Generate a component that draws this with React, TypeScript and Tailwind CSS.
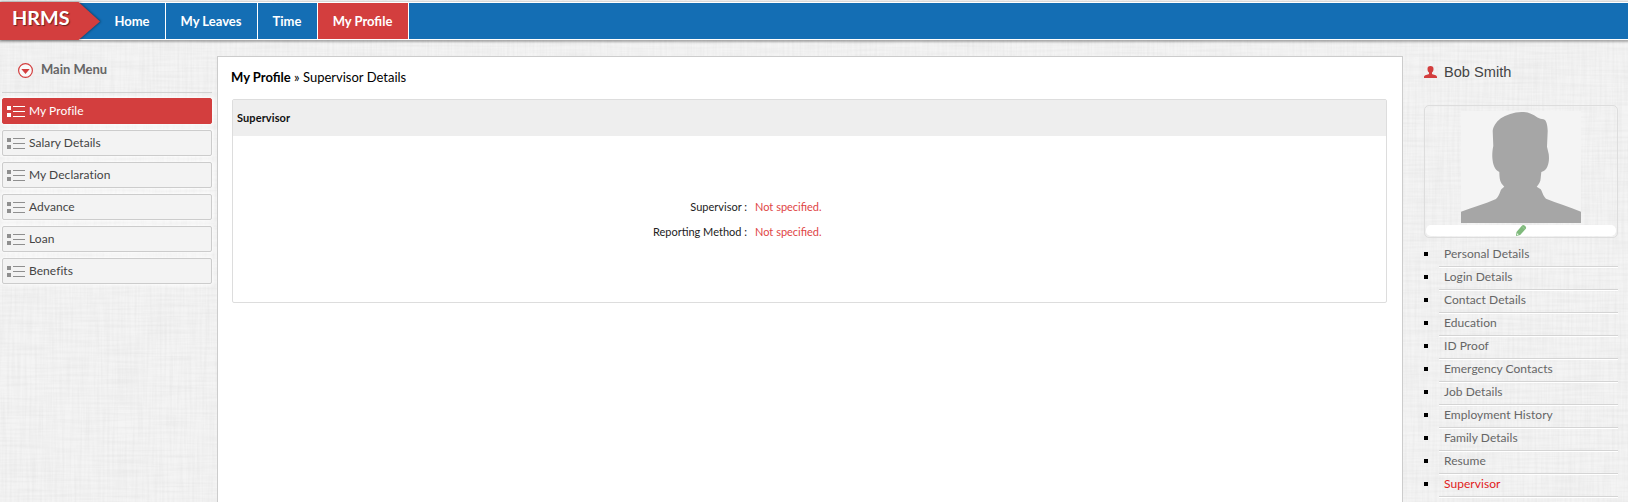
import React from "react";

const nav = [
  { label: "Home", width: "w-[66px]" },
  { label: "My Leaves", width: "w-[92px]" },
  { label: "Time", width: "w-[60px]" },
  { label: "My Profile", width: "w-[91px]", active: true },
];

const menu = ["My Profile", "Salary Details", "My Declaration", "Advance", "Loan", "Benefits"];

const links = [
  "Personal Details",
  "Login Details",
  "Contact Details",
  "Education",
  "ID Proof",
  "Emergency Contacts",
  "Job Details",
  "Employment History",
  "Family Details",
  "Resume",
  "Supervisor",
];

function Linen() {
  return (
    <svg className="absolute inset-0 h-full w-full" aria-hidden="true">
      <filter id="weft" x="0" y="0" width="100%" height="100%" colorInterpolationFilters="sRGB">
        <feTurbulence type="fractalNoise" baseFrequency="0.02 0.4" numOctaves="2" seed="4" />
        <feColorMatrix values="0 0 0 0 0.7  0 0 0 0 0.7  0 0 0 0 0.7  0.2 0 0 0 -0.07" />
      </filter>
      <filter id="warp" x="0" y="0" width="100%" height="100%" colorInterpolationFilters="sRGB">
        <feTurbulence type="fractalNoise" baseFrequency="0.4 0.02" numOctaves="2" seed="9" />
        <feColorMatrix values="0 0 0 0 0.7  0 0 0 0 0.7  0 0 0 0 0.7  0.2 0 0 0 -0.07" />
      </filter>
      <rect width="100%" height="100%" filter="url(#weft)" />
      <rect width="100%" height="100%" filter="url(#warp)" />
    </svg>
  );
}

function ListIcon({ active }: { active: boolean }) {
  return (
    <svg width="18" height="12" viewBox="0 0 18 12" shapeRendering="crispEdges" className={active ? "text-white" : "text-[#8f8f8f]"}>
      <path fill="currentColor" d="M0 1h4v4H0zM0 8h4v4H0zM6 1h12v1H6zM6 6h12v1H6zM6 11h12v1H6z" />
    </svg>
  );
}

function Header() {
  return (
    <header className="relative flex h-[41px] pt-[2px]">
      <div className="absolute inset-x-0 top-[1px] h-px bg-[#d8d8d8]" />
      <div className="flex h-[38px] w-full border-y border-white bg-[#146eb4] shadow-[0_1px_2px_1px_rgba(0,0,0,0.3)]">
        <div className="w-[100px] shrink-0" />
        <nav className="flex">
          {nav.map((n) => (
            <a
              key={n.label}
              className={`flex h-[36px] items-center justify-center border-r border-white pr-px pt-px text-[13px] font-bold text-white ${n.width} ${n.active ? "bg-[#d33e3e]" : ""}`}
            >
              {n.label}
            </a>
          ))}
        </nav>
      </div>
      <div className="absolute left-0 top-[2px] h-[38px] w-[104px]">
        <svg width="104" height="38" className="absolute inset-0 overflow-visible drop-shadow-[1px_0_1px_rgba(0,0,0,0.4)]">
          <path d="M0 0H78.500L100 19.500L78.500 38H0z" fill="#d33e3e" />
        </svg>
        <span className="relative block pl-[12px] text-[19.800px] font-bold leading-[30px] text-white [text-shadow:1px_1px_1px_rgba(0,0,0,0.5)]">HRMS</span>
      </div>
    </header>
  );
}

function Sidebar() {
  return (
    <aside className="ml-[2px] w-[210px] shrink-0">
      <div className="flex h-[52px] items-center border-b border-[#d2d2d2] pl-[16px] pt-[6px]">
        <svg width="15" height="15" viewBox="0 0 15 15" className="mt-px">
          <circle cx="7.500" cy="7.500" r="6.900" fill="#fafafa" stroke="#d33e3e" strokeWidth="1.200" />
          <path d="M3.300 6h8.400L7.500 11z" fill="#d33e3e" />
        </svg>
        <span className="ml-[8px] text-[13px] font-bold text-[#666]">Main Menu</span>
      </div>
      <ul className="mt-[5px] flex flex-col gap-[6px]">
        {menu.map((m, i) => (
          <li
            key={m}
            className={`flex h-[26px] items-center gap-[4px] rounded-[2px] border pl-[4px] text-[12px] tracking-[0.05px] shadow-[0_0_4px_1px_#fff] ${i === 0 ? "border-[#d33e3e] bg-[#d33e3e] text-white" : "border-[#ccc] bg-[#f3f3f3] text-[#444]"}`}
          >
            <ListIcon active={i === 0} />
            <span>{m}</span>
          </li>
        ))}
      </ul>
    </aside>
  );
}

function Field({ label }: { label: string }) {
  return (
    <div className="flex h-[25px] items-center text-[11px]">
      <span className="w-[514px] text-right text-[#222]">{label} :</span>
      <span className="ml-[8px] text-[#e04545]">Not specified.</span>
    </div>
  );
}

function Details() {
  return (
    <main className="ml-[5px] mt-[15px] w-[1186px] shrink-0 border border-b-0 border-[#ccc] bg-white pl-[14px] pr-[15px]">
      <h1 className="-ml-px h-[42px] pt-[10px] text-[13px] leading-[20px] text-black">
        <span className="font-bold">My Profile</span> » Supervisor Details
      </h1>
      <section className="h-[204px] rounded-[2px] border border-[#ddd]">
        <h2 className="flex h-[36px] items-center bg-[#eee] pl-[4px] pt-px text-[11px] font-bold tracking-[0.1px] text-[#111]">Supervisor</h2>
        <div className="pt-[59px]">
          <Field label="Supervisor" />
          <Field label="Reporting Method" />
        </div>
      </section>
    </main>
  );
}

function Profile() {
  return (
    <aside className="ml-[21px] w-[194px] shrink-0">
      <div className="flex h-[64px] pt-[21px]">
        <svg width="13" height="12" viewBox="0 0 13 12" className="mt-[4px]">
          <path
            d="M6.500 0C4.400 0 3.400 1.200 3.500 3C3.500 4.800 4.200 6 5 6.600V8C4 8.800 0 8.800 0 11V12H13V11C13 8.800 9 8.800 8 8V6.600C8.800 6 9.500 4.800 9.500 3C9.600 1.200 8.600 0 6.500 0z"
            fill="#d33e3e"
          />
        </svg>
        <span className="ml-[7px] font-['Liberation_Sans',sans-serif] text-[14.600px] leading-[20px] text-[#444]">Bob Smith</span>
      </div>
      <div className="flex h-[133px] flex-col items-center rounded-[5px] border border-[#ddd] pt-[5px]">
        <svg width="120" height="112" viewBox="0 0 120 112" className="shrink-0 bg-[#f4f4f4]">
          <path
            d="M60.500 1C53 1 45 4 39.500 7.500C35 11 32 16 31.700 20L32.300 35C31.400 39 31.200 43 31.300 46C31.700 54 34 59 38.300 61C38.500 66 38.500 69 40.500 72.500L43.300 75.800C41 77.500 39.800 78.500 39.500 80C38 84 37 86 35 88C24 93 12 96 0 100.700V112H120V100.700C108 96 96 92 85 87.700C82 85 81 80 79.700 78.300L75.700 75.700C78 73 79.500 71 79.700 67L80.300 61C83 60 85 59 86.300 55.700C88 52 88.300 48 87.700 43L86 35.700L86.700 20C86.500 14 85.500 9 82.500 8.200C80 7.700 79 8 76.500 6.500C71 3 67 1 60.500 1z"
            fill="#a6a6a6"
          />
        </svg>
        <div className="mt-[2px] flex h-[11px] w-[190px] items-center justify-center rounded-[5px] bg-white">
          <svg width="10" height="11" viewBox="0 0 10 11" className="overflow-visible">
            <path d="M0 11L0.500 7L5.600 0.900Q7.200 -0.700 8.900 0.700Q10.900 2.400 9.600 4L4.200 9.900z" fill="#7fba7c" />
            <path d="M6.300 1.800L8.600 3.800" stroke="#b4d8b2" strokeWidth="0.600" />
            <circle cx="1.700" cy="9.200" r="0.700" fill="#fff" />
          </svg>
        </div>
      </div>
      <ul className="mt-[4px]">
        {links.map((l, i) => (
          <li key={l} className="flex h-[23px]">
            <span className="mt-[10px] h-[4px] w-[4px] bg-black" />
            <span className={`ml-[11px] h-[25px] flex-1 border-b border-[#d4d4d4] pl-[5px] text-[12px] leading-[23px] tracking-[0.05px] shadow-[0_1px_0_#fff] ${i === links.length - 1 ? "text-[#e02020]" : "text-[#666]"}`}>{l}</span>
          </li>
        ))}
      </ul>
    </aside>
  );
}

export default function App() {
  return (
    <div className="relative h-[502px] w-[1628px] overflow-hidden bg-[#f4f4f4] font-['Lato',sans-serif]">
      <Linen />
      <div className="relative flex h-full flex-col">
        <Header />
        <div className="flex flex-1">
          <Sidebar />
          <Details />
          <Profile />
        </div>
      </div>
    </div>
  );
}
